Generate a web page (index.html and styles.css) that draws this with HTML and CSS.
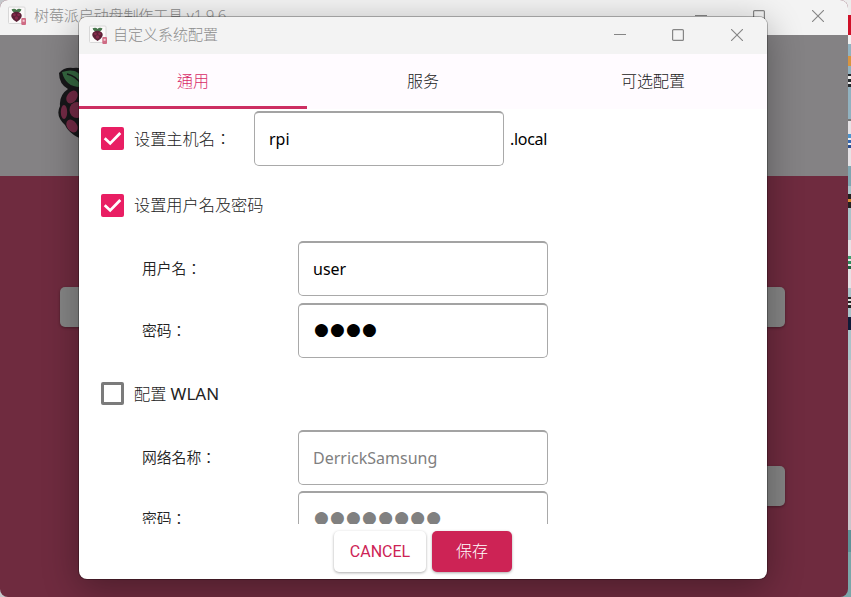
FILE: index.html
```html
<!DOCTYPE html>
<html lang="zh-TW">
<head>
<meta charset="utf-8">
<title>自定义系统配置</title>
<link rel="stylesheet" href="styles.css">
</head>
<body>
<svg width="0" height="0" class="defs">
  <symbol id="appicon" viewBox="0 0 20 20">
    <rect x="1.5" y="1" width="16.5" height="16.5" rx="1" fill="#fbf9f9" stroke="#d8d8d8"/>
    <path d="M4.6 3.2Q8 1.8 9.6 4Q11 1.8 14.4 3.2Q14 6.4 9.5 7.2Q5.2 6.4 4.6 3.2Z" fill="#47764c"/>
    <path d="M9.3 5.8Q11.4 5.2 13.6 7.2Q15.6 9.2 14 12Q12.4 14.8 9.6 16Q6.6 14.8 5 12Q3.4 9.2 5.3 7.2Q7.5 5.2 9.3 5.8Z" fill="#5b2036"/>
    <circle cx="7.4" cy="8.8" r="1.4" fill="#86294a"/><circle cx="11.6" cy="8.8" r="1.4" fill="#86294a"/><circle cx="9.5" cy="12" r="1.7" fill="#86294a"/>
    <rect x="14.3" y="12" width="4.7" height="7" rx="1" fill="#cf6b84"/><path d="M15.6 13.8h2v2h-2z" fill="#f2ccd5"/>
  </symbol>
  <symbol id="min" viewBox="0 0 12 12"><path d="M0 5.5h12" stroke="currentColor" fill="none"/></symbol>
  <symbol id="max" viewBox="0 0 12 12"><rect x=".6" y=".6" width="10.8" height="10.8" rx="1" stroke="currentColor" stroke-width="1.2" fill="none"/></symbol>
  <symbol id="close" viewBox="0 0 12 12"><path d="M0 0L12 12M12 0L0 12" stroke="currentColor" stroke-width="1.1" fill="none"/></symbol>
  <symbol id="tick" viewBox="0 0 23 23"><path d="M3.7 11.2L9.2 16.4L19.3 6" fill="none" stroke="#fff" stroke-width="2.8"/></symbol>
</svg>
<div class="desktop">
  <div class="strip"></div>
  <section class="main-window">
    <header class="titlebar">
      <svg class="app-icon"><use href="#appicon"/></svg>
      <span class="caption">树莓派启动盘制作工具 v1.9.6</span>
      <span class="controls"><svg><use href="#min"/></svg><svg><use href="#max"/></svg><svg><use href="#close"/></svg></span>
    </header>
    <div class="banner">
      <svg class="logo" viewBox="0 0 60 76">
        <path d="M1 7Q6 1 15 2Q25 0 30 9Q35 0 45 2Q54 1 59 7Q57 20 49 24Q59 30 57 40Q62 50 54 58Q48 70 30 75Q12 70 7 59Q-3 50 2 40Q1 29 10 23Q1 18 1 7Z" fill="#171719"/>
        <path d="M4 6Q22 0 27 18Q28 22 24 21Q8 22 4 6ZM56 6Q38 0 33 18Q32 22 36 21Q52 22 56 6Z" fill="#356740"/>
        <path d="M9 8Q18 10 23 18M51 8Q42 10 37 18" fill="none" stroke="#171719" stroke-width="1.5"/>
        <g fill="#742b46"><ellipse cx="14" cy="31" rx="5" ry="7" transform="rotate(35 14 31)"/><ellipse cx="6" cy="46" rx="3.2" ry="7"/><ellipse cx="19" cy="44" rx="7.5" ry="8"/><ellipse cx="14" cy="60" rx="5" ry="7" transform="rotate(-35 14 60)"/><circle cx="40" cy="44" r="8"/><circle cx="30" cy="61" r="7"/></g>
      </svg>
    </div>
    <div class="stage"><div class="choice"></div><div class="choice short"></div></div>
  </section>
  <section class="dialog">
    <header class="titlebar">
      <svg class="app-icon"><use href="#appicon"/></svg>
      <span class="caption">自定义系统配置</span>
      <span class="controls"><svg><use href="#min"/></svg><svg><use href="#max"/></svg><svg><use href="#close"/></svg></span>
    </header>
    <nav class="tabs"><span class="tab active">通用</span><span class="tab">服务</span><span class="tab">可选配置</span></nav>
    <div class="form">
      <div class="row host"><span class="check on"><svg><use href="#tick"/></svg></span><span class="label">设置主机名：</span><span class="field">rpi</span><span class="suffix">.local</span></div>
      <div class="row account"><span class="check on"><svg><use href="#tick"/></svg></span><span class="label">设置用户名及密码</span></div>
      <div class="row sub"><span class="name">用户名：</span><span class="field">user</span></div>
      <div class="row sub"><span class="name">密码：</span><span class="field dots">●●●●</span></div>
      <div class="row wlan"><span class="check"></span><span class="label">配置 <span class="latin">WLAN</span></span></div>
      <div class="row sub"><span class="name">网络名称：</span><span class="field off">DerrickSamsung</span></div>
      <div class="row sub"><span class="name">密码：</span><span class="field off dots">●●●●●●●●</span></div>
    </div>
    <footer class="actions"><span class="btn cancel">CANCEL</span><span class="btn save">保存</span></footer>
  </section>
</div>
</body>
</html>
```
FILE: styles.css
```css
* { box-sizing: border-box; }
body { margin: 0; font-family: "Noto Sans", "Noto Sans CJK TC", sans-serif; font-size: 16px; color: #222; }
.defs { position: absolute; }
.desktop { position: relative; width: 851px; height: 597px; overflow: hidden; background: #c5c8cb; }
.strip {
  position: absolute; left: 840px; top: 0; width: 11px; height: 597px;
  background: linear-gradient(#ececec 0 15px, #cf1028 15px 35px, #f2f2f2 35px 44px, #91b2c0 44px 56px, #d8943f 56px 66px, #91b2c0 66px 74px, #24282c 74px 76px, #e9e9e9 76px 79px, #24282c 79px 82px, #e9e9e9 82px 84px, #24282c 84px 87px, #91b2c0 87px 119px, #777 119px 121px, #e6e3e6 121px 134px, #4d94cf 134px 138px, #e8eef4 138px 140px, #3567b0 140px 143px, #e8eef4 143px 145px, #294e91 145px 148px, #e6e3e6 148px 166px, #7fa5b0 166px 186px, #a9c3c9 186px 194px, #222 194px 199px, #d78a35 199px 202px, #222 202px 208px, #a9c3c9 208px 240px, #e7e1e5 240px 256px, #3f9c6d 256px 259px, #e7e1e5 259px 261px, #2f8b5c 261px 264px, #e7e1e5 264px 266px, #1d6340 266px 269px, #e7e1e5 269px 288px, #a9c3c9 288px 297px, #222 297px 299px, #ddd 299px 301px, #222 301px 303px, #ddd 303px 305px, #222 305px 308px, #a9c3c9 308px 317px, #101b38 317px 330px, #a9c3c9 330px 360px, #c9c5cb 360px 530px, #5e9298 530px 552px, #7aa6a9 552px);
}
.main-window { position: absolute; left: 0; top: 0; width: 848px; height: 597px; border-radius: 8px; overflow: hidden; display: flex; flex-direction: column; background: #6f2b3f; }
.titlebar { display: flex; align-items: center; background: #f3f3f3; color: #8d8d8d; flex: none; }
.main-window .titlebar { height: 35px; padding: 0 24px 3px 7px; }
.app-icon { width: 20px; height: 20px; flex: none; }
.caption { font-weight: 300; font-size: 15px; line-height: 20px; margin: -2px 0 0 5px; white-space: nowrap; }
.main-window .caption { margin-left: 7px; letter-spacing: -.1px; }
.controls { margin-left: auto; display: flex; gap: 46px; color: #858585; }
.controls svg { width: 12px; height: 12px; overflow: visible; }
.controls svg:last-child { margin-left: 1px; }
.banner { height: 141px; background: #848284; padding: 31px 0 0 58px; flex: none; }
.logo { display: block; width: 60px; height: 76px; }
.stage { flex: 1; padding: 111px 63px 0 60px; display: flex; flex-direction: column; gap: 139px; }
.choice { height: 40px; flex: none; border-radius: 5px; background: #858585; box-shadow: 0 1px 3px #0005; }
.choice.short { margin-left: 160px; }
.dialog {
  position: absolute; left: 79px; top: 17px; width: 688px; height: 562px; border-radius: 8px; overflow: hidden;
  display: flex; flex-direction: column; background: #fff; box-shadow: 0 0 0 1px #0004, 0 8px 36px #0005;
}
.dialog .titlebar { height: 37px; padding: 0 24px 1px 9px; }
.tabs { height: 55px; flex: none; display: grid; grid-template-columns: 228px 232px 228px; background: #fffbff; }
.tab { text-align: center; line-height: 54px; height: 55px; font-weight: 300; color: #222; }
.tab.active { color: #d82b68; border-bottom: 3px solid #cd2e62; }
.form { height: 415px; flex: none; padding: 2px 0 0 22px; overflow: hidden; }
.row { display: flex; align-items: center; }
.check { width: 23px; height: 23px; border: 3px solid #7b7b7b; border-radius: 2px; flex: none; }
.check.on { border: 0; background: #e91e63; }
.check svg { display: block; width: 23px; height: 23px; }
.label { font-weight: 300; font-size: 16.2px; margin-left: 10px; line-height: 22px; white-space: nowrap; }
.latin { font-weight: 400; font-size: 17px; }
.host { height: 55px; }
.host .label { width: 120px; }
.field { width: 250px; height: 55px; border: 1px solid #a9a9a9; border-top: 2px solid #a3a3a3; border-radius: 5px; padding-left: 14px; line-height: 52px; color: #000; flex: none; overflow: hidden; white-space: nowrap; }
.suffix { margin-left: 6px; color: #000; letter-spacing: -.3px; }
.account { height: 75px; padding-top: 3px; }
.sub { height: 55px; margin-bottom: 7px; padding-left: 41px; }
.name { width: 156px; font-size: 14.8px; line-height: 20px; margin-top: -2px; flex: none; font-weight: 350; }
.dots { font-family: "DejaVu Sans", sans-serif; font-size: 17px; letter-spacing: 1.2px; line-height: 48px; padding-left: 15px; }
.off { color: #808080; }
.wlan { height: 65px; padding-bottom: 8px; }
.wlan + .sub { margin-bottom: 6px; }
.actions { display: flex; gap: 6px; padding: 7px 0 0 255px; }
.btn { height: 41px; border-radius: 5px; line-height: 41px; text-align: center; box-shadow: 0 1px 3px #0005; }
.cancel { width: 92px; font-family: Roboto, sans-serif; color: #cd2355; background: #fff; }
.save { width: 80px; background: #cd2355; color: #fff; font-weight: 300; }
```
